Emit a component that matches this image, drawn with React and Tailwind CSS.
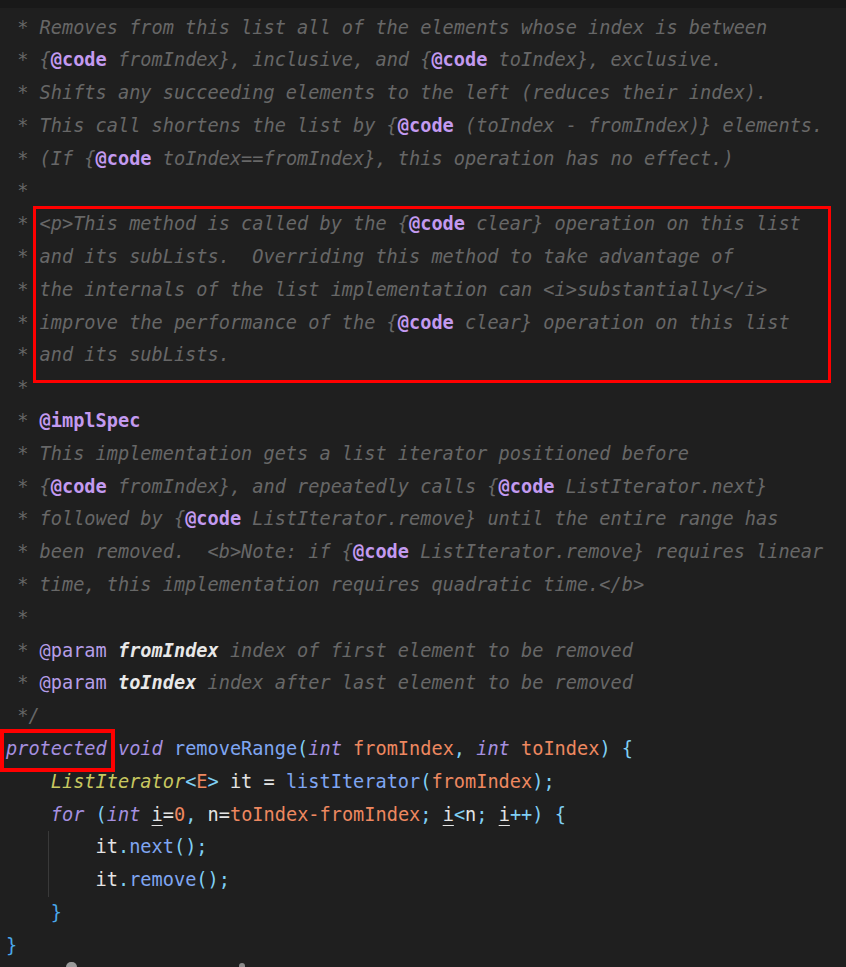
const cm = "italic text-[#676767]";
const tag = "font-bold text-[#c39af0]";
const tagL = "text-[#b69ee8]";
const pn = "font-bold italic text-[#e8e8e8]";
const kw = "italic text-[#a690e0]";
const fn = "text-[#7fa6f2]";
const pu = "text-[#7fd0f5]";
const or = "text-[#ee8860]";
const ty = "italic text-[#c8c860]";
const tx = "text-[#e4e4e4]";
const ul = "text-[#e4e4e4] underline underline-offset-4";
const br = "text-[#4aa8ec]";

const doc = [
  [[" * Removes from this list all of the elements whose index is between", cm]],
  [[" * {", cm], ["@code", tag], [" fromIndex}, inclusive, and {", cm], ["@code", tag], [" toIndex}, exclusive.", cm]],
  [[" * Shifts any succeeding elements to the left (reduces their index).", cm]],
  [[" * This call shortens the list by {", cm], ["@code", tag], [" (toIndex - fromIndex)} elements.", cm]],
  [[" * (If {", cm], ["@code", tag], [" toIndex==fromIndex}, this operation has no effect.)", cm]],
  [[" *", cm]],
  [[" * <p>This method is called by the {", cm], ["@code", tag], [" clear} operation on this list", cm]],
  [[" * and its subLists.  Overriding this method to take advantage of", cm]],
  [[" * the internals of the list implementation can <i>substantially</i>", cm]],
  [[" * improve the performance of the {", cm], ["@code", tag], [" clear} operation on this list", cm]],
  [[" * and its subLists.", cm]],
  [[" *", cm]],
  [[" * ", cm], ["@implSpec", tag]],
  [[" * This implementation gets a list iterator positioned before", cm]],
  [[" * {", cm], ["@code", tag], [" fromIndex}, and repeatedly calls {", cm], ["@code", tag], [" ListIterator.next}", cm]],
  [[" * followed by {", cm], ["@code", tag], [" ListIterator.remove} until the entire range has", cm]],
  [[" * been removed.  <b>Note: if {", cm], ["@code", tag], [" ListIterator.remove} requires linear", cm]],
  [[" * time, this implementation requires quadratic time.</b>", cm]],
  [[" *", cm]],
  [[" * ", cm], ["@param", tagL], [" ", cm], ["fromIndex", pn], [" index of first element to be removed", cm]],
  [[" * ", cm], ["@param", tagL], [" ", cm], ["toIndex", pn], [" index after last element to be removed", cm]],
  [[" */", cm]],
  [["protected", kw], [" "], ["void", kw], [" "], ["removeRange", fn], ["(", pu], ["int", kw], [" "], ["fromIndex", or], [", ", pu], ["int", kw], [" "], ["toIndex", or], [")", pu], [" "], ["{", pu]],
  [["    "], ["ListIterator", ty], ["<", pu], ["E", or], [">", pu], [" it = ", tx], ["listIterator", fn], ["(", pu], ["fromIndex", or], [");", pu]],
  [["    "], ["for", kw], [" "], ["(", pu], ["int", kw], [" "], ["i", ul], ["=", tx], ["0", or], [", ", pu], ["n=", tx], ["toIndex-fromIndex", or], ["; ", pu], ["i", ul], ["<", pu], ["n", tx], ["; ", pu], ["i", ul], ["++) {", pu]],
];

const body = [
  [["    "], ["it", tx], [".", pu], ["next", fn], ["();", pu]],
  [["    "], ["it", tx], [".", pu], ["remove", fn], ["();", pu]],
];

const tail = [
  [["    "], ["}", br]],
  [["}", br]],
];

function Line({ parts }) {
  return (
    <div className="h-[32.8px] leading-[32.8px] whitespace-pre">
      {parts.map(([t, c], i) => (
        <span key={i} className={c}>{t}</span>
      ))}
    </div>
  );
}

export default function App() {
  return (
    <div className="relative h-[967px] w-[846px] overflow-hidden bg-[#1f1f1f] font-['DejaVu_Sans_Mono',monospace] text-[18.6px]">
      <div className="h-[8px] bg-[#191919]" />
      <div className="pl-[6px] pt-[3.5px]">
        {doc.map((p, i) => <Line key={i} parts={p} />)}
        <div className="ml-[42px] border-l border-[#393939] pl-[1.8px]">
          {body.map((p, i) => <Line key={i} parts={p} />)}
        </div>
        {tail.map((p, i) => <Line key={i} parts={p} />)}
      </div>

      {/* annotation boxes */}
      <div className="absolute left-[33px] top-[206px] h-[177px] w-[798px] border-[3px] border-[#ff0000]" />
      <div className="absolute left-0 top-[729px] h-[43px] w-[115px] border-[4px] border-[#ff0000]" />

      <div className="absolute left-[66px] top-[962px] h-[10px] w-[11px] rounded-full bg-[#9a9a9a]" />
      <div className="absolute left-[239px] top-[963px] h-[8px] w-[6px] rounded-full bg-[#8a8a8a]" />
    </div>
  );
}
